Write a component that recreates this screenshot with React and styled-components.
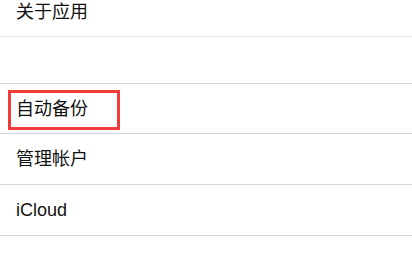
import React from 'react';
import styled, { createGlobalStyle } from 'styled-components';

const GlobalStyle = createGlobalStyle`
    html, body {
        margin: 0;
        padding: 0;
        background: #ffffff;
        overflow: hidden;
    }
    body {
        font-family: "Liberation Sans", "Noto Sans CJK SC", sans-serif;
        color: #111111;
    }
`;

const Page = styled.div`
    width: 412px;
    height: 258px;
    overflow: hidden;
    background: #fff;
`;

const List = styled.div`
    margin-top: -12px;
`;

const Group = styled.div`
    border-top: ${(p) => (p.$top ? '1px solid #d6d6d8' : 'none')};
    margin-top: ${(p) => (p.$gap ? `${p.$gap}px` : '0')};
`;

const Row = styled.div`
    position: relative;
    display: flex;
    align-items: center;
    height: ${(p) => p.$height || 50}px;
    padding-left: 16px;
    border-bottom: 1px solid ${(p) => (p.$light ? '#e6e8ec' : '#d6d6d8')};
    font-size: 18px;
    line-height: 1;
`;

const Highlight = styled.div`
    position: absolute;
    left: 8px;
    top: 6px;
    width: 112px;
    height: 40px;
    box-sizing: border-box;
    border: 3px solid #f43b3b;
`;

const items = [
    { id: 1, name: '自动备份', height: 49, highlighted: true },
    { id: 2, name: '管理帐户' },
    { id: 3, name: 'iCloud' },
];

export default function App() {
    return (
        <Page>
            <GlobalStyle />
            <List>
                <Row $height={48} $light>关于应用</Row>
                <Group $gap={46} $top>
                    {items.map((item) => (
                        <Row key={item.id} $height={item.height}>
                            {item.name}
                            {item.highlighted && <Highlight />}
                        </Row>
                    ))}
                </Group>
            </List>
        </Page>
    );
}
